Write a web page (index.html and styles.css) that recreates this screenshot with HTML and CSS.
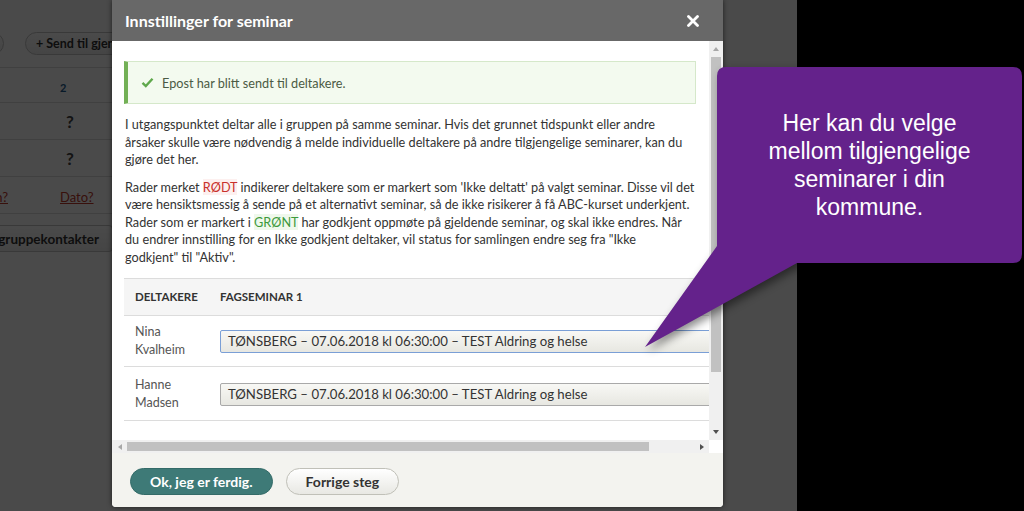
FILE: index.html
```html
<!DOCTYPE html>
<html lang="no">
<head>
<meta charset="utf-8">
<title>Innstillinger for seminar</title>
<link rel="stylesheet" href="styles.css">
</head>
<body>
<div class="screen">
  <div class="page">
    <div class="toolbar">
      <span class="pill pill-prev">Vis (0)</span>
      <span class="pill">+ Send til gjennomføring</span>
    </div>
    <table class="overview">
      <tr class="head"><td class="c1"></td><td class="c2"><span class="num">2</span></td></tr>
      <tr><td class="c1"></td><td class="c2"><span class="q">?</span></td></tr>
      <tr><td class="c1"></td><td class="c2"><span class="q">?</span></td></tr>
      <tr><td class="c1"><a class="link">Sesjon?</a></td><td class="c2"><a class="link">Dato?</a></td></tr>
    </table>
    <div class="page-actions"><span class="pill pill-strong">Legg til gruppekontakter</span></div>
  </div>
  <div class="backdrop"></div>

  <div class="modal">
    <div class="modal-header">
      <span class="modal-title">Innstillinger for seminar</span>
      <svg class="close" width="12" height="12" viewBox="0 0 12 12"><path d="M1.5 1.5 L10.5 10.5 M10.5 1.5 L1.5 10.5" stroke="#fff" stroke-width="2.8" stroke-linecap="round"/></svg>
    </div>
    <div class="modal-body">
      <div class="viewport">
        <div class="alert">
          <svg class="check" width="13" height="11" viewBox="0 0 13 11"><path d="M1.5 5.8 L4.8 9 L11.5 1.8" fill="none" stroke="#5fa84c" stroke-width="2.4"/></svg>
          <span>Epost har blitt sendt til deltakere.</span>
        </div>
        <p class="intro">I utgangspunktet deltar alle i gruppen på samme seminar. Hvis det grunnet tidspunkt eller andre<br>årsaker skulle være nødvendig å melde individuelle deltakere på andre tilgjengelige seminarer, kan du<br>gjøre det her.</p>
        <p class="intro second">Rader merket <span class="red">RØDT</span> indikerer deltakere som er markert som 'Ikke deltatt' på valgt seminar. Disse vil det<br>være hensiktsmessig å sende på et alternativt seminar, så de ikke risikerer å få ABC-kurset underkjent.<br>Rader som er markert i <span class="green">GRØNT</span> har godkjent oppmøte på gjeldende seminar, og skal ikke endres. Når<br>du endrer innstilling for en Ikke godkjent deltaker, vil status for samlingen endre seg fra "Ikke<br>godkjent" til "Aktiv".</p>
        <table class="sessions">
          <thead>
            <tr><th class="name">Deltakere</th><th>Fagseminar 1</th></tr>
          </thead>
          <tbody>
            <tr><td class="name">Nina Kvalheim</td><td><div class="select focus">TØNSBERG – 07.06.2018 kl 06:30:00 – TEST Aldring og helse</div></td></tr>
            <tr><td class="name">Hanne Madsen</td><td><div class="select">TØNSBERG – 07.06.2018 kl 06:30:00 – TEST Aldring og helse</div></td></tr>
          </tbody>
        </table>
      </div>
      <div class="vbar">
        <span class="arrow"><span class="tri tri-up"></span></span>
        <span class="vthumb"></span>
        <span class="fill"></span>
        <span class="arrow"><span class="tri tri-down"></span></span>
      </div>
      <div class="hbar">
        <span class="arrow"><span class="tri tri-left"></span></span>
        <span class="hthumb"></span>
        <span class="fill"></span>
        <span class="arrow"><span class="tri tri-right"></span></span>
      </div>
      <div class="corner"></div>
    </div>
    <div class="modal-footer">
      <span class="btn btn-primary">Ok, jeg er ferdig.</span>
      <span class="btn btn-secondary">Forrige steg</span>
    </div>
  </div>
</div>
<div class="offscreen"></div>

<div class="callout">
  <svg class="callout-shape" width="384" height="300" viewBox="0 0 384 300">
    <path d="M86 7 H373 Q382 7 382 16 V194 Q382 203 373 203 H157 L5 287 L77 186 V16 Q77 7 86 7 Z" fill="#64228b"/>
  </svg>
  <div class="callout-text">Her kan du velge mellom tilgjengelige seminarer i din kommune.</div>
</div>
</body>
</html>
```

FILE: styles.css
```css
* { box-sizing: border-box; }
html, body { margin: 0; padding: 0; }
body {
  position: relative;
  display: flex;
  width: 1024px;
  height: 511px;
  overflow: hidden;
  background: #000;
  font-family: Lato, "Open Sans", sans-serif;
  color: #333;
}

.screen {
  position: relative;
  flex: none;
  width: 797px;
  height: 511px;
  overflow: hidden;
  background: #fff;
}
.offscreen { flex: 1; background: #000; }

/* background page (behind backdrop) */
.page { width: 900px; margin-left: -80px; padding-top: 32px; }
.toolbar { display: flex; gap: 21px; padding-left: 24px; height: 23px; }
.pill {
  display: inline-flex;
  align-items: center;
  height: 23px;
  padding: 0 10px;
  border: 1px solid #c4c4c4;
  border-radius: 12px;
  background: linear-gradient(#fff, #ececec);
  font-size: 12.5px;
  font-weight: 700;
  color: #333;
  white-space: nowrap;
}
.pill-prev { width: 60px; justify-content: flex-end; }
.overview {
  margin-top: 12px;
  width: 800px;
  border-collapse: collapse;
  border-top: 1px solid #dcdcdc;
}
.overview td { height: 37px; padding: 0; border-bottom: 1px solid #dcdcdc; }
.overview .head td { height: 35px; }
.overview .c1 { width: 120px; text-align: right; padding-right: 32px; }
.overview .c2 { padding-left: 20px; }
.num { font-size: 11px; font-weight: 700; color: #1d5b8c; }
.q { padding-left: 6px; font-size: 17px; font-weight: 700; color: #444; }
.link { font-size: 13px; color: #c0392b; text-decoration: underline; }
.page-actions { display: flex; justify-content: flex-end; width: 193px; margin-top: 11px; }
.pill-strong { height: 27px; border-radius: 4px; padding: 0 13px 0 12px; font-size: 13.5px; }

.backdrop {
  position: absolute;
  inset: 0;
  background: rgba(0, 0, 0, 0.71);
}

/* modal */
.modal {
  position: absolute;
  left: 112px;
  top: 0;
  width: 611px;
  height: 507px;
  display: flex;
  flex-direction: column;
  background: #fff;
  border-radius: 0 0 4px 4px;
  overflow: hidden;
  box-shadow: 0 0 5px rgba(0, 0, 0, 0.6);
}
.modal-header {
  flex: none;
  height: 41px;
  display: flex;
  align-items: center;
  justify-content: space-between;
  padding: 0 24px 0 13px;
  background: #686868;
}
.modal-title { font-size: 16px; font-weight: 700; color: #fff; }

.modal-body {
  flex: none;
  display: grid;
  grid-template-columns: 1fr 14px;
  grid-template-rows: 399px 13px;
}
.viewport {
  min-width: 0;
  overflow: hidden;
  padding: 20px 13px 0 12px;
}
.alert {
  display: flex;
  align-items: center;
  gap: 8px;
  height: 43px;
  padding: 0 14px 0 13px;
  border: 1px solid #d5e8ca;
  border-left: 4px solid #73b056;
  background: #f3faef;
  font-size: 12.7px;
  color: #4b5a44;
}
.intro {
  margin: 12px -12px 0 1px;
  font-size: 12.7px;
  line-height: 17.5px;
  color: #333;
  white-space: nowrap;
}
.intro.second { margin-top: 10px; }
.red { color: #c9302c; background: #fdf0ef; }
.green { color: #3d9a3d; background: #eff8ec; }

.sessions {
  margin-top: 12px;
  border-collapse: collapse;
  border-top: 1px solid #dcdcdc;
}
.sessions th {
  height: 37px;
  padding: 0 11px 2px;
  background: #f5f5f5;
  border-bottom: 1px solid #dcdcdc;
  text-align: left;
  font-size: 11.5px;
  font-weight: 700;
  text-transform: uppercase;
  color: #333;
  white-space: nowrap;
}
.sessions td {
  padding: 7px 11px;
  border-bottom: 1px solid #dcdcdc;
  vertical-align: middle;
  font-size: 12.5px;
  line-height: 18px;
  color: #555;
}
.sessions tbody tr + tr td { padding-top: 9px; padding-bottom: 8px; }
.sessions .name { width: 88px; }
.select {
  display: flex;
  align-items: center;
  width: 500px;
  height: 23px;
  padding: 0 7px;
  border: 1px solid #a9a9a9;
  border-radius: 2px;
  background: linear-gradient(#f8f8f5, #e7e7e1);
  font-size: 13.2px;
  color: #333;
  white-space: nowrap;
}
.select.focus { border-color: #7a9fd6; }

/* fake scrollbars */
.vbar {
  display: flex;
  flex-direction: column;
  align-items: center;
  background: #f0f0f0;
}
.hbar {
  display: flex;
  align-items: center;
  background: #f0f0f0;
}
.arrow { flex: none; display: flex; align-items: center; justify-content: center; }
.vbar .arrow { width: 100%; height: 16px; }
.hbar .arrow { width: 15px; height: 100%; }
.vthumb { flex: none; width: 10px; height: 315px; background: #c1c1c1; }
.hthumb { flex: none; width: 522px; height: 9px; background: #c1c1c1; }
.fill { flex: 1; }
.corner { background: #fff; }
.tri { width: 0; height: 0; border: 3.5px solid transparent; }
.tri-up { border-top: 0; border-bottom: 4px solid #a8a8a8; }
.tri-down { border-bottom: 0; border-top: 4px solid #505050; }
.tri-left { border-left: 0; border-right: 4px solid #a8a8a8; }
.tri-right { border-right: 0; border-left: 4px solid #505050; }

.modal-footer {
  flex: 1;
  display: flex;
  align-items: flex-start;
  gap: 13px;
  padding: 15px 0 0 18px;
  background: #f3f3ef;
}
.btn {
  display: inline-flex;
  align-items: center;
  height: 27px;
  padding: 0 19px;
  border-radius: 14px;
  font-size: 14px;
  font-weight: 700;
  white-space: nowrap;
}
.btn-primary { background: #3e7a77; border: 1px solid #346b68; color: #fff; }
.btn-secondary { background: linear-gradient(#fff, #e8e8e3); border: 1px solid #c0c0b8; color: #333; }

/* tutorial callout */
.callout {
  position: absolute;
  left: 640px;
  top: 60px;
  width: 384px;
  height: 300px;
}
.callout-shape {
  position: absolute;
  inset: 0;
  filter: drop-shadow(3px 4px 4px rgba(0, 0, 0, 0.45));
}
.callout-text {
  position: relative;
  width: 305px;
  height: 196px;
  margin: 7px 0 0 77px;
  padding: 0 46px;
  display: flex;
  align-items: center;
  justify-content: center;
  text-align: center;
  font-family: "Liberation Sans", Arial, sans-serif;
  font-size: 23px;
  line-height: 28px;
  color: #fff;
}
```
